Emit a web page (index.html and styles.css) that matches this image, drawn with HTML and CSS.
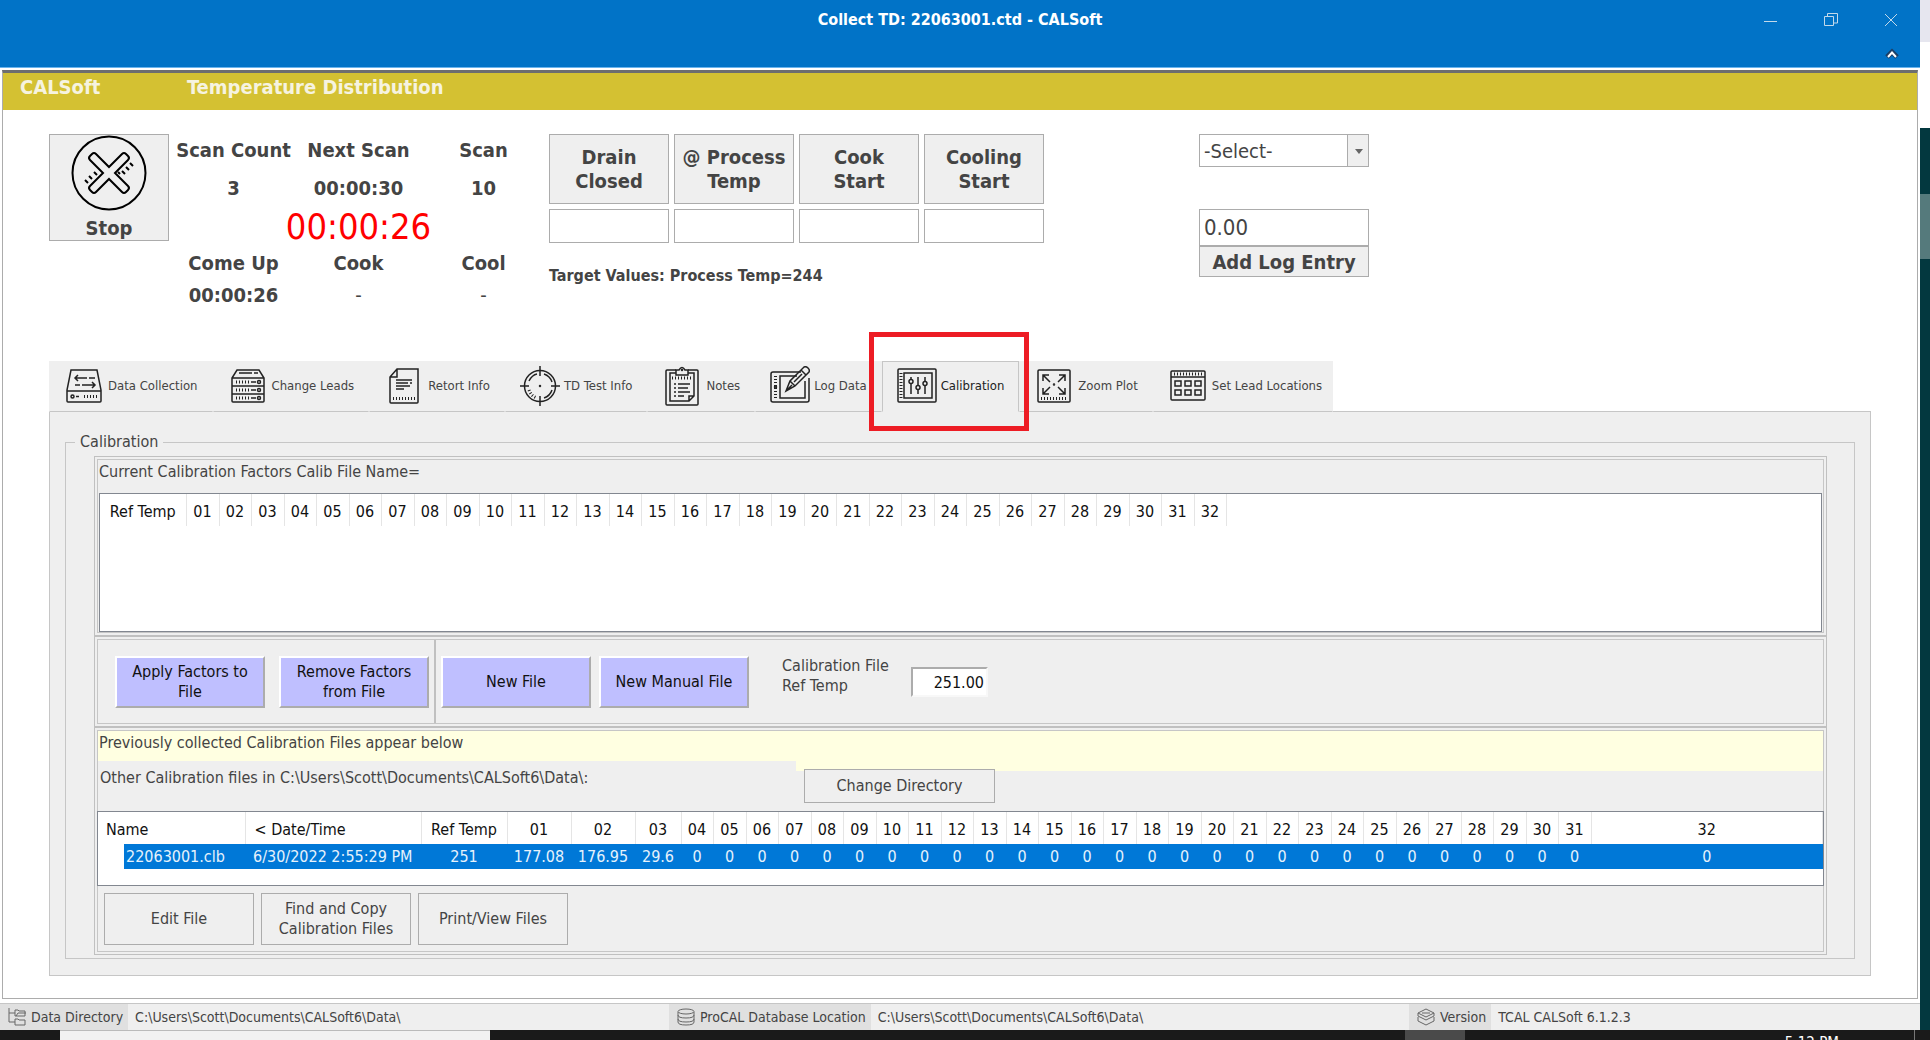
FILE: index.html
```html
<!DOCTYPE html>
<html lang="en">
<head>
    <meta charset="UTF-8">
    <meta name="viewport" content="width=device-width, initial-scale=1.0">
    <title>Collect TD: 22063001.ctd - CALSoft</title>
    <link rel="stylesheet" href="styles.css">
</head>
<body>
    <div class="desktop">
        <div class="window">
            <header class="titlebar">
                <div class="title">Collect TD: 22063001.ctd - CALSoft</div>
                <div class="window-buttons">
                    <button aria-label="Minimize"><svg width="14" height="14" viewBox="0 0 14 14"><path d="M0 8.5h13"/></svg></button>
                    <button aria-label="Restore"><svg width="14" height="14" viewBox="0 0 14 14"><path d="M.5 3.5h9v9h-9zM3.500 3V.5h10v9.500H10"/></svg></button>
                    <button aria-label="Close"><svg width="14" height="14" viewBox="0 0 14 14"><path d="M1 1l12 12M13 1L1 13"/></svg></button>
                </div>
                <button class="ribbon-toggle" aria-label="Collapse ribbon"><svg width="14" height="12" viewBox="0 0 14 12"><path class="shade" d="M2 9l5-5 5 5"/><path class="light" d="M3 9l4-4.500L11 9"/></svg></button>
            </header>

            <main class="client">
                <div class="banner">
                    <span class="app-name">CALSoft</span>
                    <span>Temperature Distribution</span>
                </div>

                <!-- Scan controls -->
                <section class="toolbar">
                    <button class="stop">
                        <svg width="76" height="76" viewBox="0 0 76 76">
                            <circle cx="38" cy="38" r="36.500"/>
                            <path d="M38 32l13-13q2-2 4 0l2 2q2 2 0 4L44 38l13 13q2 2 0 4l-2 2q-2 2-4 0L38 44 25 57q-2 2-4 0l-2-2q-2-2 0-4l13-13-13-13q-2-2 0-4l2-2q2-2 4 0z"/>
                            <path class="dots" d="M51 36l3 3M55 32l3 3M59 28l3 3M47 37l2 2M23 37l3 3M18 41l3 3M14 45l3 3"/>
                        </svg>
                        <span>Stop</span>
                    </button>
                    <div class="stats">
                        <span>Scan Count</span><span>Next Scan</span><span>Scan</span>
                        <span>3</span><span>00:00:30</span><span>10</span>
                        <span></span><span class="timer">00:00:26</span><span></span>
                        <span>Come Up</span><span>Cook</span><span>Cool</span>
                        <span>00:00:26</span><span class="empty">-</span><span class="empty">-</span>
                    </div>
                    <div class="events">
                        <button>Drain<br>Closed</button>
                        <button>@ Process<br>Temp</button>
                        <button>Cook<br>Start</button>
                        <button>Cooling<br>Start</button>
                        <input type="text" aria-label="Drain closed time">
                        <input type="text" aria-label="Process temp time">
                        <input type="text" aria-label="Cook start time">
                        <input type="text" aria-label="Cooling start time">
                        <p class="targets">Target Values: Process Temp=244</p>
                    </div>
                    <div class="log-entry">
                        <div class="select-box">
                            <select aria-label="Log entry type"><option>-Select-</option></select>
                        </div>
                        <input type="text" aria-label="Log entry value" value="0.00">
                        <button>Add Log Entry</button>
                    </div>
                </section>

                <nav class="tabs">
                    <button class="tab">
                        <svg viewBox="0 0 40 40"><path d="M7 4h26l4 20v11q0 1-1 1H4q-1 0-1-1V24zM3 25h34"/><path d="M11 12h12M14 9l-3 3 3 3M25 12h6M30 19H18M28 16l3 3-3 3M11 19h5"/><circle cx="8.500" cy="30.500" r="1.500"/><path d="M12 30.500h3"/><path class="ticks" d="M20 30.500h14"/></svg>
                        Data Collection
                    </button>
                    <button class="tab">
                        <svg viewBox="0 0 40 40"><path d="M9 4h22l5 8v23q0 1-1 1H5q-1 0-1-1V12zM4 12h32M4 20h32M4 28h32M11 7h13M26 7h4"/><path class="ticks" d="M8 16h14M8 24h14M8 32h14"/><path d="M23 16h5M23 24h5M23 32h5"/><circle cx="31" cy="16" r="1.500"/><circle cx="31" cy="24" r="1.500"/><circle cx="31" cy="32" r="1.500"/></svg>
                        Change Leads
                    </button>
                    <button class="tab">
                        <svg viewBox="0 0 40 40"><path d="M13 3h21v33q0 1-1 1H7q-1 0-1-1V11zM13 3v8H6"/><path d="M12 14h16M12 17h12M26 17h2M12 20h14M12 23h8"/><path class="ticks" d="M9 32.500h22"/></svg>
                        Retort Info
                    </button>
                    <button class="tab">
                        <svg viewBox="0 0 40 40"><circle cx="20" cy="20" r="15.500"/><path d="M20 0v10M20 30v10M0 20h9M31 20h9"/><path d="M9 15q3-6 8-7M24 8q6 2 8 8M32 24q-2 6-8 8"/><path class="ticks" d="M9 24q2 6 8 8"/><circle cx="20" cy="20" r=".5"/></svg>
                        TD Test Info
                    </button>
                    <button class="tab">
                        <svg viewBox="0 0 40 40"><path d="M14 4H5q-1 0-1 1v33q0 1 1 1h30q1 0 1-1V5q0-1-1-1h-9"/><path d="M14 7V4h3q3-5 6 0h3v5H14zM14 7H8v28h19l5-5V7h-6M27 35v-5h5"/><circle cx="20" cy="4" r=".5"/><path class="ticks" d="M10 12h20"/><path d="M12 18h2M16 18h12M12 22h2M16 22h10M12 26h2M16 26h12M12 30h2M16 30h6"/></svg>
                        Notes
                    </button>
                    <button class="tab">
                        <svg viewBox="0 0 40 40"><path d="M31 6H3q-2 0-2 2v26q0 2 2 2h34q2 0 2-2V12"/><path d="M27 10H10v22h25V15"/><path d="M16 25l4-10L34 1q2-1 4 1t1 4L25 20zM20 15l5 5M31 4l5 5M17 24l5-5M24 16l8-8"/><path class="ticks" d="M5.500 10v22"/><circle cx="5.500" cy="21" r="1"/></svg>
                        Log Data
                    </button>
                    <button class="tab active">
                        <svg viewBox="0 0 40 40"><rect x="1" y="3" width="38" height="33" rx="1"/><rect x="7" y="7" width="28" height="25"/><path class="ticks" d="M4 7v25"/><path d="M14 11v2M14 18v10M21 11v8M21 24v4M28 11v4M28 20v8"/><circle cx="14" cy="15.500" r="2"/><circle cx="21" cy="21.500" r="2"/><circle cx="28" cy="17.500" r="2"/></svg>
                        Calibration
                        <span class="callout"></span>
                    </button>
                    <button class="tab">
                        <svg viewBox="0 0 40 40"><rect x="4" y="4" width="32" height="32" rx="1"/><path d="M9 15V9h6M9 9l7 7M25 9h6v6M31 9l-7 7M9 22v6h6M9 28l7-7M31 22v6h-6M31 28l-7-7"/><circle cx="20" cy="18.500" r=".5"/><path class="ticks" d="M7 32.500h27"/></svg>
                        Zoom Plot
                    </button>
                    <button class="tab">
                        <svg viewBox="0 0 40 40"><rect x="3" y="5" width="34" height="29" rx="1"/><path d="M3 11h34"/><path class="ticks" d="M6 8h29"/><path d="M7 15h6v5H7zM17 15h6v5h-6zM27 15h6v5h-6zM7 24h6v5H7zM17 24h6v5h-6zM27 24h6v5h-6z"/></svg>
                        Set Lead Locations
                    </button>
                </nav>

                <section class="tab-page">
                    <fieldset>
                        <legend>Calibration</legend>
                        <div class="stack">
                            <div class="cell">
                                <div class="box factors">
                                    <p>Current Calibration Factors Calib File Name=</p>
                                    <div class="list">
                                        <table>
                                            <thead>
                                                <tr>
                                                    <th class="ref">Ref Temp</th>
                                                    <th>01</th><th>02</th><th>03</th><th>04</th><th>05</th><th>06</th><th>07</th><th>08</th>
                                                    <th>09</th><th>10</th><th>11</th><th>12</th><th>13</th><th>14</th><th>15</th><th>16</th>
                                                    <th>17</th><th>18</th><th>19</th><th>20</th><th>21</th><th>22</th><th>23</th><th>24</th>
                                                    <th>25</th><th>26</th><th>27</th><th>28</th><th>29</th><th>30</th><th>31</th><th>32</th>
                                                </tr>
                                            </thead>
                                        </table>
                                    </div>
                                </div>
                            </div>
                            <div class="cell">
                                <div class="box actions">
                                    <div class="factor-actions">
                                        <button>Apply Factors to File</button>
                                        <button>Remove Factors from File</button>
                                    </div>
                                    <div class="file-actions">
                                        <button>New File</button>
                                        <button>New Manual File</button>
                                        <label for="refTemp">Calibration File<br>Ref Temp</label>
                                        <input type="text" id="refTemp" value="251.00">
                                    </div>
                                </div>
                            </div>
                            <div class="cell">
                                <div class="box files">
                                    <p class="notice">Previously collected Calibration Files appear below</p>
                                    <div class="directory">
                                        <p>Other Calibration files in C:\Users\Scott\Documents\CALSoft6\Data\:</p>
                                        <button>Change Directory</button>
                                    </div>
                                    <div class="list">
                                        <table>
                                            <thead>
                                                <tr>
                                                    <th class="name">Name</th><th class="date">&lt; Date/Time</th><th class="ref">Ref Temp</th>
                                                    <th class="wide">01</th><th class="wide">02</th><th class="mid">03</th>
                                                    <th>04</th><th>05</th><th>06</th><th>07</th><th>08</th><th>09</th><th>10</th>
                                                    <th>11</th><th>12</th><th>13</th><th>14</th><th>15</th><th>16</th><th>17</th>
                                                    <th>18</th><th>19</th><th>20</th><th>21</th><th>22</th><th>23</th><th>24</th>
                                                    <th>25</th><th>26</th><th>27</th><th>28</th><th>29</th><th>30</th><th>31</th>
                                                    <th class="last">32</th>
                                                </tr>
                                            </thead>
                                            <tbody>
                                                <tr>
                                                    <td class="name">22063001.clb</td><td class="date">6/30/2022 2:55:29 PM</td><td>251</td>
                                                    <td>177.08</td><td>176.95</td><td>29.6</td>
                                                    <td>0</td><td>0</td><td>0</td><td>0</td><td>0</td><td>0</td><td>0</td>
                                                    <td>0</td><td>0</td><td>0</td><td>0</td><td>0</td><td>0</td><td>0</td>
                                                    <td>0</td><td>0</td><td>0</td><td>0</td><td>0</td><td>0</td><td>0</td>
                                                    <td>0</td><td>0</td><td>0</td><td>0</td><td>0</td><td>0</td><td>0</td>
                                                    <td>0</td>
                                                </tr>
                                            </tbody>
                                        </table>
                                    </div>
                                    <div class="file-buttons">
                                        <button>Edit File</button>
                                        <button>Find and Copy Calibration Files</button>
                                        <button>Print/View Files</button>
                                    </div>
                                </div>
                            </div>
                        </div>
                    </fieldset>
                </section>
            </main>

            <footer class="statusbar">
                <div class="status">
                    <span class="status-name">
                        <svg width="18" height="18" viewBox="0 0 18 18"><path d="M1 0v14h6M1 5h6M7 2h3l1 1h6v5H7zM7 11h3l1 1h6v5H7zM8 8l2-3h8"/></svg>
                        Data Directory
                    </span>
                    <span>C:\Users\Scott\Documents\CALSoft6\Data\</span>
                </div>
                <div class="status">
                    <span class="status-name">
                        <svg width="18" height="18" viewBox="0 0 18 18"><ellipse cx="9" cy="3.500" rx="8" ry="2.500"/><path d="M1 4v3q0 3 8 3t8-3V4M1 7v4q0 3 8 3t8-3V7M1 11v3q0 3 8 3t8-3v-3"/></svg>
                        ProCAL Database Location
                    </span>
                    <span>C:\Users\Scott\Documents\CALSoft6\Data\</span>
                </div>
                <div class="status">
                    <span class="status-name">
                        <svg width="18" height="18" viewBox="0 0 18 18"><path d="M9 1l8 4-8 4-8-4zM1 5v3l8 4 8-4V5M1 9v4l8 4 8-4V9M5 5h8"/></svg>
                        Version
                    </span>
                    <span>TCAL CALSoft 6.1.2.3</span>
                </div>
            </footer>
        </div>
        <div class="wallpaper">
            <div class="behind"></div>
            <div class="tile"></div>
        </div>
    </div>
    <div class="taskbar">
        <div class="search"></div>
        <div class="running"></div>
        <div class="clock">5:12 PM</div>
        <div class="show-desktop"></div>
    </div>
</body>
</html>
```
FILE: styles.css
```css
* {
    box-sizing: border-box;
}
body {
    margin: 0;
    height: 100vh;
    display: flex;
    flex-direction: column;
    overflow: hidden;
    font-family: "DejaVu Sans Condensed", "Noto Sans", sans-serif;
    font-size: 16px;
    line-height: 20px;
    color: #444;
    background: #fff;
}
p {
    margin: 0;
}
button, input, select {
    font: inherit;
    color: inherit;
    margin: 0;
    padding: 0;
    border: 1px solid #acacac;
    border-radius: 0;
    background: #efefef;
}
input, select {
    background: #fff;
}
svg {
    flex: none;
    fill: none;
    stroke: #222;
}
.desktop {
    flex: 1;
    display: flex;
    min-height: 0;
}
.window {
    flex: 1;
    display: flex;
    flex-direction: column;
    min-width: 0;
}

/* Title bar */
.titlebar {
    position: relative;
    flex: none;
    height: 68px;
    background: #0173c7;
    border-bottom: 1px solid #6bb5ee;
    color: #fff;
}
.title {
    font-weight: bold;
    text-align: center;
    line-height: 40px;
}
.window-buttons {
    position: absolute;
    top: 13px;
    right: 22px;
    display: flex;
    gap: 46px;
}
.titlebar button {
    display: flex;
    border: 0;
    background: none;
}
.titlebar svg {
    stroke: #c3d9ea;
}
.titlebar .ribbon-toggle {
    position: absolute;
    right: 21px;
    bottom: 7px;
}
.ribbon-toggle .shade {
    stroke: #1c3f66;
    stroke-width: 5;
}
.ribbon-toggle .light {
    stroke: #fff;
    stroke-width: 2;
}

/* Client area */
.client {
    flex: 1;
    margin: 2px 2px 4px;
    border: 1px solid #acacac;
    border-top: 3px solid #6e6e6e;
}
.banner {
    display: flex;
    height: 37px;
    padding-left: 17px;
    background: #d4c132;
    color: #f6f3e0;
    font-size: 20px;
    font-weight: bold;
    line-height: 28px;
}
.app-name {
    width: 167px;
}
.toolbar {
    display: flex;
    align-items: flex-start;
    padding: 24px 46px 53px;
    font-size: 20px;
    font-weight: bold;
    line-height: 24px;
}
.stop {
    display: flex;
    flex-direction: column;
    align-items: center;
    justify-content: space-between;
    width: 120px;
    height: 107px;
    font-weight: bold;
}
.stop svg {
    stroke: #000;
    stroke-width: 2;
}
.stats {
    display: grid;
    grid-template-columns: repeat(3, 125px);
    grid-template-rows: 32px 44px 34px 38px 26px;
    margin-left: 2px;
}
.stats span {
    display: flex;
    align-items: center;
    justify-content: center;
    white-space: nowrap;
}
.stats .timer {
    color: #f00;
    font-size: 36px;
    font-weight: normal;
}
.stats .empty {
    font-weight: normal;
}
.events {
    display: grid;
    grid-template-columns: repeat(4, 120px);
    grid-template-rows: 70px 34px;
    gap: 5px;
    margin-left: 3px;
}
.events button {
    font-weight: bold;
    white-space: nowrap;
}
.targets {
    grid-column: 1 / -1;
    margin-top: 16px;
    font-size: 16px;
}
.log-entry {
    display: flex;
    flex-direction: column;
    width: 170px;
    margin-left: 155px;
    font-weight: normal;
}
.select-box {
    position: relative;
    height: 33px;
    margin-bottom: 42px;
}
.select-box select {
    width: 100%;
    height: 100%;
    padding-left: 4px;
    appearance: none;
    font-size: 20px;
}
.select-box::before {
    content: "";
    position: absolute;
    top: 1px;
    right: 1px;
    bottom: 1px;
    width: 20px;
    border-left: 1px solid #acacac;
    background: #efefef;
    pointer-events: none;
}
.select-box::after {
    content: "";
    position: absolute;
    top: 15px;
    right: 6px;
    border: 4px solid transparent;
    border-top: 5px solid #666;
    border-bottom: 0;
    pointer-events: none;
}
.log-entry input {
    height: 37px;
    padding-left: 4px;
    font-size: 22px;
}
.log-entry button {
    height: 31px;
    font-weight: bold;
}

/* Tabs */
.tabs {
    display: flex;
    width: max-content;
    height: 51px;
    margin-left: 46px;
    margin-bottom: -1px;
    background: #efefef;
}
.tab {
    display: flex;
    align-items: center;
    gap: 4px;
    padding: 0 14px 2px;
    border: 1px solid transparent;
    border-bottom-color: #c6c6c6;
    font-size: 13px;
    white-space: nowrap;
}
.tab:last-child {
    padding-right: 10px;
}
.tab svg {
    width: 40px;
    height: 40px;
    stroke-width: 1.5;
}
.tab .ticks {
    stroke-width: 3;
    stroke-dasharray: 1 2;
}
.tab.active {
    position: relative;
    z-index: 1;
    color: #222;
    border-color: #c6c6c6 #c6c6c6 #efefef;
}
/* red frame drawn over the open tab */
.callout {
    position: absolute;
    inset: -30px -11px -20px -14px;
    border: 5px solid #ed1c24;
}
.tab-page {
    margin: 0 46px;
    padding: 20px 15px 16px;
    border: 1px solid #c6c6c6;
    background: #efefef;
}
fieldset {
    margin: 0;
    padding: 4px 27px 3px 28px;
    border: 1px solid #c6c6c6;
    min-width: 0;
}
legend {
    margin-left: -19px;
    padding: 0 5px;
}
.stack {
    border: 1px solid #c0c0c0;
}
.cell {
    padding: 2px;
}
.cell + .cell {
    border-top: 2px solid #c0c0c0;
}
.box {
    border: 1px solid #c6c6c6;
}
.list {
    border: 1px solid #828790;
    background: #fff;
    color: #111;
    overflow: hidden;
}
table {
    border-collapse: collapse;
    table-layout: fixed;
}
th, td {
    padding: 0;
    text-align: center;
    font-weight: normal;
    white-space: nowrap;
}
th {
    width: 33px;
    height: 32px;
    padding-top: 4px;
    border-right: 1px solid #e5e5e5;
}
th:nth-child(odd) {
    width: 32px;
}
th.ref {
    width: 86px;
}

/* Calibration factors */
.factors p {
    padding: 2px 1px 11px;
}
.factors .list {
    height: 139px;
    margin: 0 1px;
}
.factors table {
    width: 1126px;
}

/* Buttons under the factors */
.actions {
    display: flex;
    height: 85px;
}
.factor-actions {
    display: flex;
    gap: 14px;
    padding: 16px 5px 0 17px;
    border-right: 2px solid #c0c0c0;
}
.file-actions {
    display: flex;
    gap: 8px;
    padding: 16px 0 0 5px;
}
.actions button {
    width: 150px;
    height: 52px;
    padding: 0 10px;
    border: 2px solid;
    border-color: #fff #acacac #acacac #fff;
    background: #bfbfff;
    color: #111;
}
.actions label {
    margin-left: 25px;
    width: 121px;
}
.actions input {
    width: 77px;
    height: 30px;
    margin-top: 11px;
    padding-right: 2px;
    border: 2px solid;
    border-color: #acacac #f8f8f8 #f8f8f8 #acacac;
    color: #111;
    text-align: right;
}

/* Calibration files */
.notice {
    height: 30px;
    padding: 2px 1px;
    background: #ffffe1;
}
.directory {
    display: flex;
    align-items: flex-start;
    height: 50px;
    background: linear-gradient(#ffffe1 10px, #efefef 10px);
}
.directory p {
    width: 698px;
    height: 50px;
    padding: 7px 2px;
    background: #efefef;
}
.directory button {
    width: 191px;
    height: 34px;
    margin: 8px;
}
.files .list {
    height: 75px;
    margin: 0 -1px;
}
.files table {
    width: 100%;
}
.files .name, .files .date {
    text-align: left;
}
.files th.name {
    width: 147px;
    padding-left: 8px;
}
.files th.date {
    width: 176px;
    padding-left: 9px;
}
.files th.wide {
    width: 64px;
}
.files th.mid {
    width: 46px;
}
.files th.last {
    width: auto;
}
.files td {
    height: 25px;
    background: #0078d7;
    color: #e6f2fc;
}
.files td.name {
    padding-left: 28px;
    background: linear-gradient(to right, #fff 26px, #0078d7 26px);
}
.files td.date {
    padding-left: 8px;
}
.file-buttons {
    display: flex;
    gap: 7px;
    padding: 7px 6px 6px;
}
.file-buttons button {
    width: 150px;
    height: 52px;
    padding: 0 10px;
}

/* Status bar */
.statusbar {
    display: grid;
    flex: none;
    grid-template-columns: 669fr 740fr 511fr;
    height: 27px;
    border-top: 1px solid #c6c6c6;
    background: #efefef;
    font-size: 14px;
    line-height: 26px;
    white-space: nowrap;
}
.status {
    display: flex;
    gap: 7px;
    min-width: 0;
}
.status-name {
    display: flex;
    align-items: center;
    gap: 5px;
    padding: 0 5px 0 8px;
    background: #e0e0e0;
}
.status svg {
    stroke: #666;
}

/* Desktop behind the window */
.wallpaper {
    width: 10px;
    background: #03383f;
}
.behind {
    height: 128px;
    background: linear-gradient(#e6e6ef 42px, #fff 42px);
}
.tile {
    height: 65px;
    margin-top: 66px;
    background: #557a7c;
}
.taskbar {
    display: flex;
    flex: none;
    height: 10px;
    padding: 0 15px 0 60px;
    overflow: hidden;
    background: #1a1a1a;
    color: #fff;
    font-size: 15px;
}
.search {
    width: 430px;
    border-top: 1px solid #bbb;
    background: #f2f2f2;
}
.running {
    width: 60px;
    margin-left: auto;
    background: #4a4a4a;
}
.clock {
    margin: 3px 75px 0 320px;
}
.show-desktop {
    width: 1px;
    background: #777;
}
```
